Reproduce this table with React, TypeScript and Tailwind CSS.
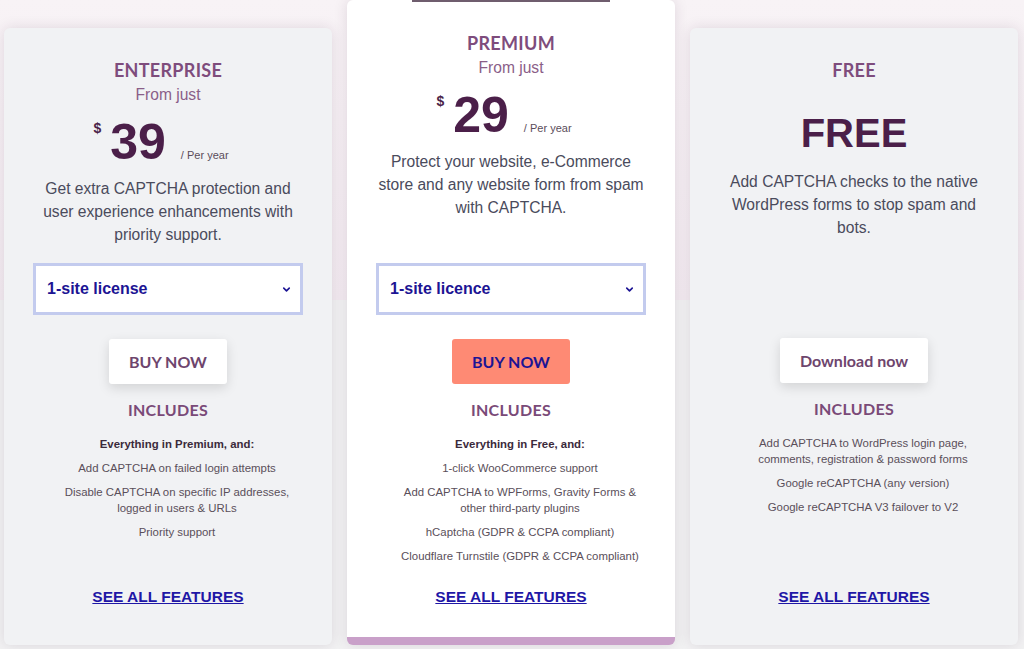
import React from 'react';
import { ChevronDown } from 'lucide-react';

interface Plan {
  id: string;
  name: string;
  price?: string;
  description: string[];
  license?: string;
  cta: string;
  ctaStyle: 'white' | 'salmon';
  lead?: string;
  features: string[][];
  featured?: boolean;
}

const plans: Plan[] = [
  {
    id: 'enterprise',
    name: 'ENTERPRISE',
    price: '39',
    description: ['Get extra CAPTCHA protection and', 'user experience enhancements with', 'priority support.'],
    license: '1-site license',
    cta: 'BUY NOW',
    ctaStyle: 'white',
    lead: 'Everything in Premium, and:',
    features: [
      ['Add CAPTCHA on failed login attempts'],
      ['Disable CAPTCHA on specific IP addresses,', 'logged in users & URLs'],
      ['Priority support'],
    ],
  },
  {
    id: 'premium',
    name: 'PREMIUM',
    price: '29',
    description: ['Protect your website, e-Commerce', 'store and any website form from spam', 'with CAPTCHA.'],
    license: '1-site licence',
    cta: 'BUY NOW',
    ctaStyle: 'salmon',
    lead: 'Everything in Free, and:',
    features: [
      ['1-click WooCommerce support'],
      ['Add CAPTCHA to WPForms, Gravity Forms &', 'other third-party plugins'],
      ['hCaptcha (GDPR & CCPA compliant)'],
      ['Cloudflare Turnstile (GDPR & CCPA compliant)'],
    ],
    featured: true,
  },
  {
    id: 'free',
    name: 'FREE',
    description: ['Add CAPTCHA checks to the native', 'WordPress forms to stop spam and', 'bots.'],
    cta: 'Download now',
    ctaStyle: 'white',
    features: [
      ['Add CAPTCHA to WordPress login page,', 'comments, registration & password forms'],
      ['Google reCAPTCHA (any version)'],
      ['Google reCAPTCHA V3 failover to V2'],
    ],
  },
];

const heading = "font-['Lato',sans-serif] font-bold";
const body = "font-['Liberation_Sans',Arial,sans-serif]";

const PlanCard: React.FC<{ plan: Plan }> = ({ plan }) => {
  return (
    <div
      className={`relative flex w-[328px] flex-col rounded-md shadow-[0_0_14px_rgba(60,30,60,0.13)] ${
        plan.featured
          ? 'h-[645px] border-b-[8px] border-[#c9a0c9] bg-white'
          : 'h-[617px] bg-[#f1f2f4] pb-[8px]'
      }`}
    >
      {/* cut-off badge edge above the featured card */}
      {plan.featured && <div className="absolute left-[65px] top-0 h-[2px] w-[198px] bg-[#6f5d6e]" />}

      {/* header */}
      <div className={`flex flex-1 flex-col items-center text-center ${plan.featured ? 'pt-[31px]' : 'pt-[30px]'}`}>
        <div className={`${heading} text-[18px] leading-[24px] tracking-[0.3px] text-[#7e4c7c]`}>{plan.name}</div>

        {plan.price ? (
          <>
            <div className={`${body} mt-[1px] text-[15.6px] leading-[24px] text-[#8a5e88]`}>From just</div>
            <div className={`${body} mt-[10px] flex items-baseline pr-[14px] text-[#4b1f49]`}>
              <span className="self-start pt-[4px] text-[14px] font-bold leading-none">$</span>
              <span className="ml-[9px] text-[50px] font-bold leading-none">{plan.price}</span>
              <span className="ml-[15px] text-[11px] leading-none text-[#5b4d5a]">/ Per year</span>
            </div>
            <div className={`${body} mt-[10px] text-[15.6px] leading-[23px] text-[#4a4b5c]`}>
              {plan.description.map((l) => (
                <div key={l}>{l}</div>
              ))}
            </div>
          </>
        ) : (
          <>
            <div className={`${body} mt-[31px] text-[40px] font-bold leading-none text-[#4b1f49]`}>FREE</div>
            <div className={`${body} mt-[17px] text-[15.6px] leading-[23px] text-[#4a4b5c]`}>
              {plan.description.map((l) => (
                <div key={l}>{l}</div>
              ))}
            </div>
          </>
        )}
      </div>

      {/* actions + features */}
      <div className="flex h-[374px] flex-col items-center px-[29px] pb-[30px]">
        {plan.license ? (
          <div className="flex h-[52px] w-full items-center justify-between border-[3px] border-[#c3cbee] bg-white pl-[11px] pr-[8px]">
            <span className={`${body} text-[16px] font-bold text-[#1c1494]`}>{plan.license}</span>
            <ChevronDown size={11} strokeWidth={3.5} className="text-[#1c1494]" />
          </div>
        ) : (
          <div className="h-[51px]" />
        )}

        <button
          className={`mt-[24px] flex h-[45px] items-center rounded-[3px] px-[20px] text-[16px] ${heading} ${
            plan.ctaStyle === 'salmon'
              ? 'bg-[#fe8a74] text-[#1c1494]'
              : 'bg-white text-[#6e456d] shadow-[0_4px_12px_rgba(0,0,0,0.13)]'
          }`}
        >
          {plan.cta}
        </button>

        <div className={`${heading} mt-[16px] text-[16px] leading-[20px] tracking-[0.3px] text-[#7a4a78]`}>INCLUDES</div>

        <div className={`${body} mt-[16px] flex flex-col items-center gap-[8px] pl-[18px] text-center text-[11.4px] leading-[16px] text-[#5a4f5a]`}>
          {plan.lead && <div className="font-bold text-[#3b2a3b]">{plan.lead}</div>}
          {plan.features.map((f) => (
            <div key={f[0]}>
              {f.map((l) => (
                <div key={l} className="whitespace-nowrap">{l}</div>
              ))}
            </div>
          ))}
        </div>

        <a href="#" className={`${body} mt-auto text-[15.5px] font-bold leading-[20px] text-[#1f17a6] underline`}>
          SEE ALL FEATURES
        </a>
      </div>
    </div>
  );
};

const App: React.FC = () => {
  return (
    <div className="h-[649px] w-[1024px] overflow-hidden bg-[linear-gradient(to_bottom,#f8f3f6_0px,#f3ebf1_300px,#f2f2f3_300px)]">
      <div className="flex h-[645px] items-end gap-[15px] pl-[4px]">
        {plans.map((p) => (
          <PlanCard key={p.id} plan={p} />
        ))}
      </div>
    </div>
  );
};

export default App;
